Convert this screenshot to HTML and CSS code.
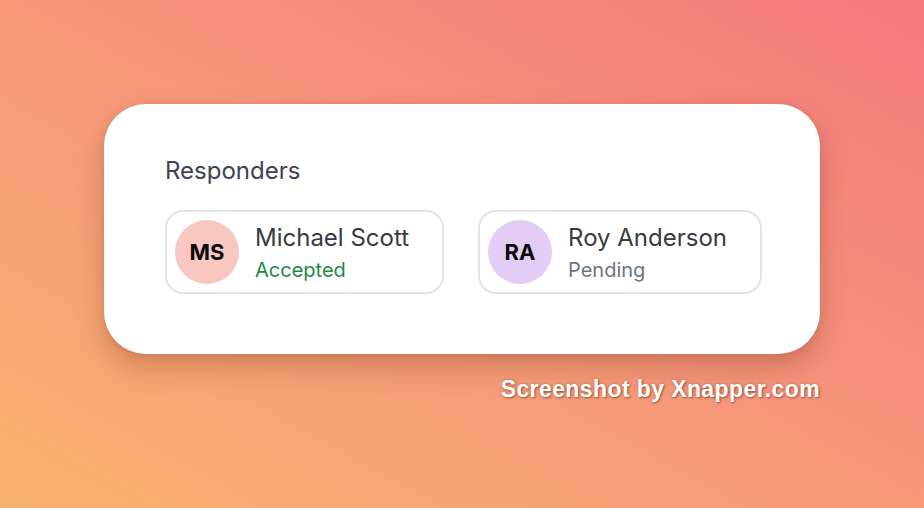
FILE: index.html
```html
<!DOCTYPE html>
<html>
<head>
<meta charset="utf-8">
<link rel="stylesheet" href="styles.css">
</head>
<body>
<main class="stage">
  <div class="frame">
    <section class="card">
      <h2 class="title">Responders</h2>
      <div class="chips">
        <div class="chip">
          <div class="avatar avatar-pink">MS</div>
          <div class="info">
            <div class="name">Michael Scott</div>
            <div class="status status-accepted">Accepted</div>
          </div>
        </div>
        <div class="chip">
          <div class="avatar avatar-purple">RA</div>
          <div class="info">
            <div class="name">Roy Anderson</div>
            <div class="status status-pending">Pending</div>
          </div>
        </div>
      </div>
    </section>
    <div class="watermark">Screenshot by Xnapper.com</div>
  </div>
</main>
</body>
</html>
```

FILE: styles.css
```css
* { box-sizing: border-box; }
html, body { margin: 0; padding: 0; }
body {
  width: 924px;
  height: 508px;
  overflow: hidden;
  font-family: Inter, "Noto Sans", sans-serif;
  background: linear-gradient(to top right, #f9b26f 0%, #f6977a 50%, #f3797d 100%);
}
.stage {
  height: 508px;
  display: flex;
  justify-content: center;
  padding-top: 104px;
}
.frame {
  width: 716px;
  display: flex;
  flex-direction: column;
}
.card {
  background: #fff;
  border-radius: 42px;
  height: 250px;
  padding: 53px 40px 60px 61px;
  box-shadow: 0 14px 28px rgba(120, 50, 30, 0.28), 0 2px 6px rgba(120, 50, 30, 0.12);
}
.title {
  margin: 0;
  font-size: 24px;
  line-height: 28px;
  font-weight: 400;
  color: #3b4256;
}
.chips {
  display: flex;
  gap: 34px;
  margin-top: 25px;
}
.chip {
  flex: none;
  display: flex;
  align-items: center;
  gap: 16px;
  padding: 8px 33px 8px 8px;
  border: 2px solid #e3e4e8;
  border-radius: 18px;
  white-space: nowrap;
}
.avatar {
  flex: none;
  width: 64px;
  height: 64px;
  border-radius: 50%;
  display: flex;
  align-items: center;
  justify-content: center;
  font-size: 22px;
  font-weight: 700;
  color: #0d0d0d;
}
.avatar-pink { background: #f8c8c0; }
.avatar-purple { background: #e3cdf4; }
.info {
  display: flex;
  flex-direction: column;
  gap: 5px;
}
.name {
  font-size: 24px;
  line-height: 30px;
  color: #363b40;
  font-weight: 400;
}
.status {
  font-size: 20px;
  line-height: 24px;
}
.status-accepted { color: #1f8649; }
.status-pending { color: #6e7480; }
.watermark {
  align-self: flex-end;
  margin-top: 21px;
  font-family: "Liberation Sans", Arial, sans-serif;
  font-weight: 700;
  font-size: 23px;
  line-height: 28px;
  letter-spacing: 0.4px;
  color: #fff;
  text-shadow: 1px 1px 2px rgba(90, 40, 20, 0.55), 0 0 3px rgba(90, 40, 20, 0.25);
}
```
